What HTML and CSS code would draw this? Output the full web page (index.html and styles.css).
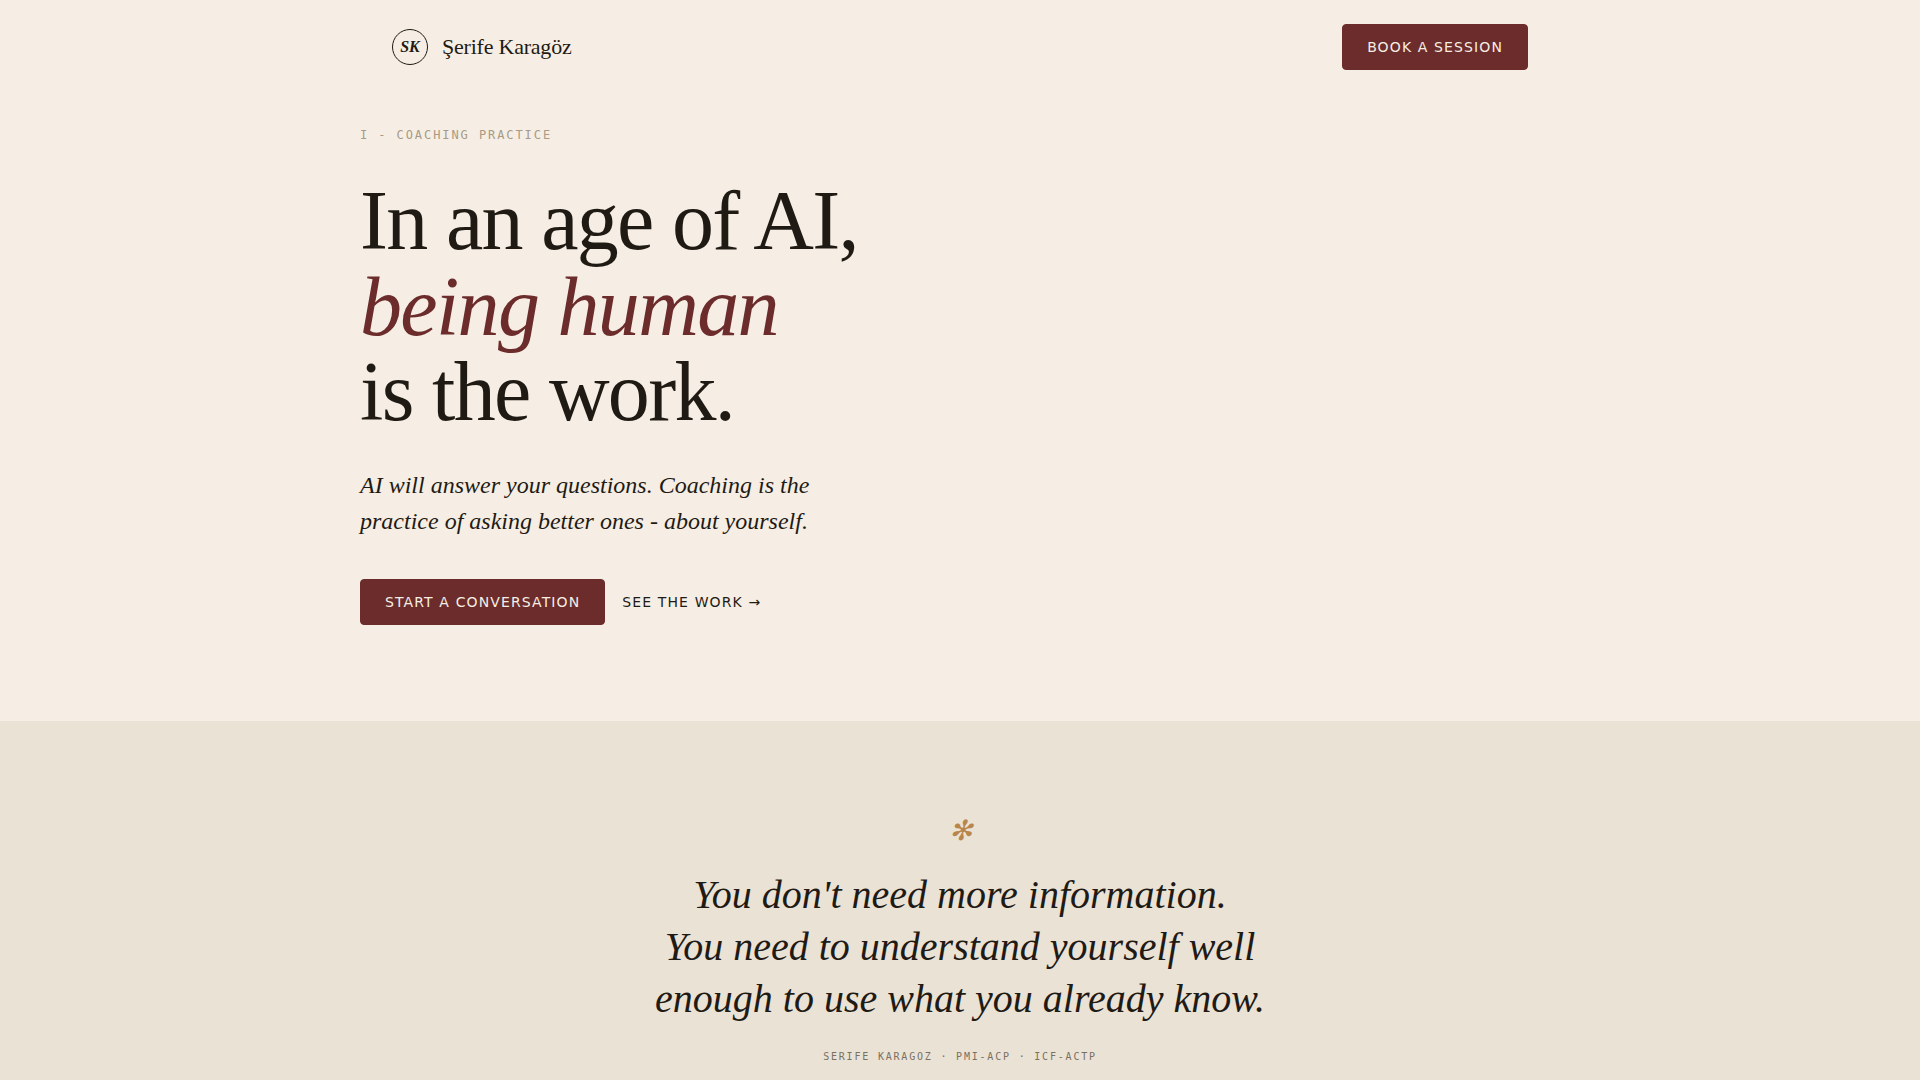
FILE: index.html
```html
<!DOCTYPE html>
<html lang="en">

<head>
    <meta charset="utf-8">
    <title>Şerife Karagöz</title>
    <meta name="viewport" content="width=device-width, initial-scale=1">
    <link rel="stylesheet" href="styles.css">
</head>

<body>
    <header class="nav">
        <a class="brand" href="#top">
            <span class="brand-mark">SK</span>
            <span class="brand-name">Şerife Karagöz</span>
        </a>
        <a class="btn btn-primary" href="#book">Book a session</a>
    </header>

    <main id="top">
        <section class="hero">
            <p class="eyebrow">I - Coaching practice</p>
            <h1>In an age of AI,<br><em>being human</em><br>is the work.</h1>
            <p class="lede">AI will answer your questions. Coaching is the practice of asking better ones - about yourself.</p>
            <div class="actions">
                <a class="btn btn-primary" href="#book">Start a conversation</a>
                <a class="btn btn-text" href="#quote">See the work →</a>
            </div>
        </section>

        <section class="quote" id="quote">
            <blockquote>
                <span class="quote-mark">✻</span>
                You don't need more information.<br>You need to understand yourself well enough to use what you already know.
            </blockquote>
            <p class="quote-by">Serife Karagoz · PMI-ACP · ICF-ACTP</p>
        </section>
    </main>
</body>

</html>
```
FILE: styles.css
```css
:root {
    --paper: #f6eee4;
    --sand: #eae2d5;
    --ink: #1f1b14;
    --wine: #6b2c2b;
    --gold: #b8864b;
    --serif: "Liberation Serif", "Times New Roman", serif;
    --sans: "DejaVu Sans", sans-serif;
    --mono: "DejaVu Sans Mono", monospace;
}

* {
    box-sizing: border-box;
}

body {
    margin: 0;
    background: var(--paper);
    color: var(--ink);
    font-family: var(--serif);
}

a {
    color: inherit;
    text-decoration: none;
}

/* nav */
.nav {
    display: flex;
    align-items: center;
    justify-content: space-between;
    max-width: 1200px;
    margin: 0 auto;
    padding: 24px 32px;
}

.brand {
    display: flex;
    align-items: center;
    gap: 14px;
}

.brand-mark {
    display: flex;
    align-items: center;
    justify-content: center;
    width: 36px;
    height: 36px;
    border: 1px solid var(--ink);
    border-radius: 50%;
    font-size: 16px;
    font-style: italic;
    font-weight: bold;
}

.brand-name {
    font-size: 22px;
    letter-spacing: -0.01em;
}

/* buttons */
.btn {
    display: inline-block;
    border: 1px solid transparent;
    border-radius: 4px;
    font-family: var(--sans);
    font-size: 14px;
    line-height: 16px;
    letter-spacing: 0.08em;
    text-transform: uppercase;
}

.btn-primary {
    padding: 14px 24px;
    background: var(--wine);
    border-color: var(--wine);
    color: var(--paper);
}

.btn-text {
    padding: 14px 0;
}

/* hero */
.hero {
    max-width: 1200px;
    margin: 0 auto;
    padding: 32px 0 96px;
}

.eyebrow {
    margin: 0 0 34px;
    color: #a89a85;
    font-family: var(--mono);
    font-size: 12px;
    line-height: 18px;
    letter-spacing: 0.16em;
    text-transform: uppercase;
}

h1 {
    margin: 0 0 32px;
    font-size: 84px;
    font-weight: normal;
    line-height: 1.02;
    letter-spacing: -0.02em;
}

h1 em {
    color: var(--wine);
}

.lede {
    max-width: 480px;
    margin: 0 0 40px;
    font-size: 24px;
    font-style: italic;
    line-height: 36px;
}

.actions {
    display: flex;
    gap: 16px;
}

/* quote */
.quote {
    padding: 96px 32px;
    background: var(--sand);
    text-align: center;
}

blockquote {
    max-width: 640px;
    margin: 0 auto;
    font-size: 40px;
    font-style: italic;
    line-height: 52px;
}

.quote-mark {
    display: block;
    margin-bottom: 24px;
    color: var(--gold);
    font-size: 28px;
    line-height: 28px;
}

.quote-by {
    margin: 24px 0 0;
    color: #7a7060;
    font-family: var(--mono);
    font-size: 10px;
    line-height: 16px;
    letter-spacing: 0.18em;
    text-transform: uppercase;
}
```
